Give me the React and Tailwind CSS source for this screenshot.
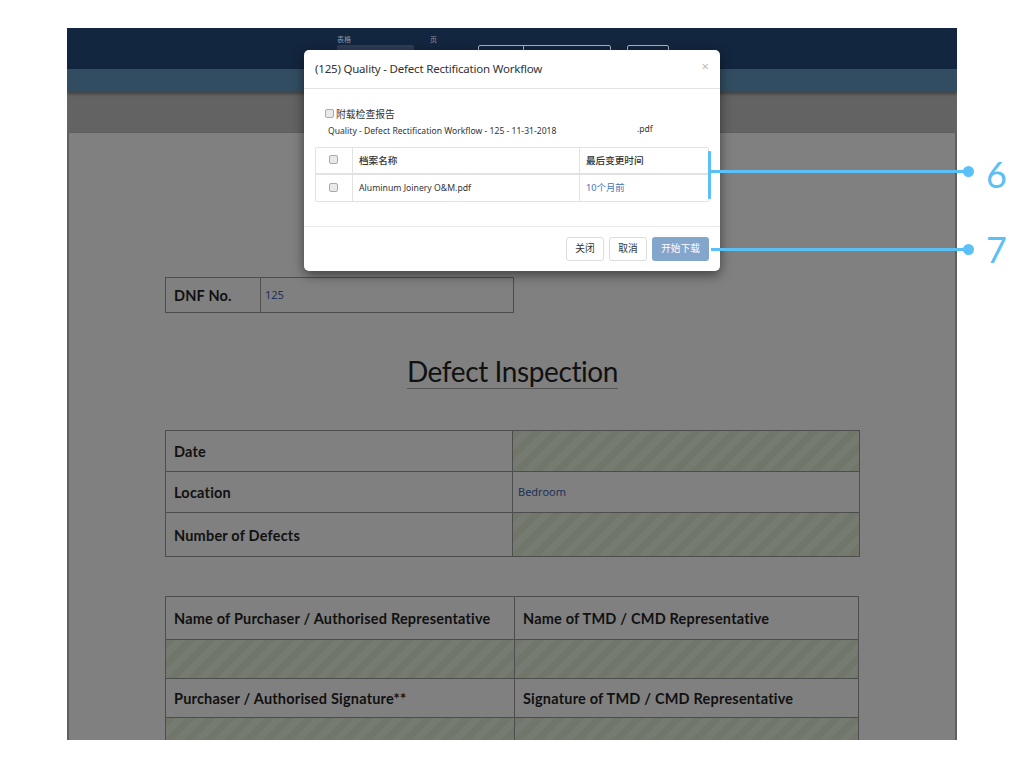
import React from "react";

const stripe = "bg-[repeating-linear-gradient(135deg,#70776a_0px,#70776a_7px,#767b71_7px,#767b71_14px)]";
const cell = "border border-[#4d4d4d] flex items-center px-2 pt-[2px] text-[14.5px] font-bold text-[#111] tracking-[0.2px]";
const value = "flex items-center text-[11px] text-[#1d3058] font-['Noto_Sans',sans-serif]";

function Check({ className = "" }) {
  return <span className={"inline-block w-[9px] h-[9px] rounded-[2px] border border-[#aaa] bg-[#e9e9e9] " + className} />;
}

export default function App() {
  return (
    <div className="relative w-[1024px] h-[768px] bg-white pt-[28px] px-[67px] overflow-hidden font-['Noto_Sans','Noto_Sans_CJK_SC',sans-serif]">
      <div className="h-[712px] w-[890px] flex flex-col overflow-hidden bg-[#636363]">
        <div className="h-[41px] shrink-0 bg-[#13263f] relative">
          <div className="absolute left-[270px] top-[7px] text-[7px] leading-[9px] text-[#8794a3]">表格</div>
          <div className="absolute left-[363px] top-[7px] text-[7px] leading-[9px] text-[#8794a3]">页</div>
          <div className="absolute left-[270px] top-[17px] w-[77px] h-[10px] bg-[#2c3d55] rounded-[2px]" />
          <div className="absolute left-[411px] top-[17px] w-[133px] h-[10px] border border-[#aab2bd] rounded-[2px]" />
          <div className="absolute left-[456px] top-[17px] h-[10px] border-l border-[#aab2bd]" />
          <div className="absolute left-[560px] top-[17px] w-[42px] h-[10px] border border-[#aab2bd] rounded-[2px]" />
        </div>
        <div className="h-[23px] shrink-0 bg-[#324d62] shadow-[0_2px_3px_rgba(0,0,0,0.35)] z-10" />
        <div className="h-[40px] shrink-0 bg-[#636363]" />
        <div className="flex-1 mx-[1px] bg-[#808080] border-x border-t border-[#5e5e5e] pl-[96px] pt-[144px] font-['Lato',sans-serif]">
          <div className="grid grid-cols-[96px_253px] h-[36px] w-[349px]">
            <div className={cell}>DNF No.</div>
            <div className={"border-y border-r border-[#4d4d4d] px-1 " + value}>125</div>
          </div>
          <div className="w-[695px] mt-[38px] flex justify-center">
            <span className="text-[28px] leading-[40px] font-normal tracking-[-0.4px] text-[#111] border-b border-[#555] h-[38px]">Defect Inspection</span>
          </div>
          <div className="w-[695px] mt-[41px] grid grid-cols-[348px_347px] grid-rows-[42px_41px_44px]">
            <div className={cell}>Date</div>
            <div className={"border-y border-r border-[#4d4d4d] " + stripe} />
            <div className={cell + " border-t-0"}>Location</div>
            <div className={"border-b border-r border-[#4d4d4d] px-[5px] " + value}>Bedroom</div>
            <div className={cell + " border-t-0"}>Number of Defects</div>
            <div className={"border-b border-r border-[#4d4d4d] " + stripe} />
          </div>
          <div className="w-[694px] mt-[39px] grid grid-cols-[350px_344px] grid-rows-[44px_39px_39px_40px]">
            <div className={cell}>Name of Purchaser / Authorised Representative</div>
            <div className={cell + " border-l-0"}>Name of TMD / CMD Representative</div>
            <div className={"border-x border-b border-[#4d4d4d] " + stripe} />
            <div className={"border-r border-b border-[#4d4d4d] " + stripe} />
            <div className={cell + " border-t-0"}>Purchaser / Authorised Signature**</div>
            <div className={cell + " border-t-0 border-l-0"}>Signature of TMD / CMD Representative</div>
            <div className={"border-x border-b border-[#4d4d4d] " + stripe} />
            <div className={"border-r border-b border-[#4d4d4d] " + stripe} />
          </div>
        </div>
      </div>

      {/* modal */}
      <div className="absolute z-20 left-[304px] top-[50px] w-[416px] h-[221px] bg-white rounded-[5px] shadow-[0_4px_12px_rgba(0,0,0,0.5)] flex flex-col text-[#333]">
        <div className="h-[39px] shrink-0 border-b border-[#e5e5e5] flex items-center justify-between pl-[11px] pr-[11px]">
          <span className="text-[11.5px] tracking-[-0.2px] text-[#333]">(125) Quality - Defect Rectification Workflow</span>
          <span className="text-[13px] leading-none text-[#bbb] -mt-[6px]">×</span>
        </div>
        <div className="h-[138px] shrink-0 border-b border-[#e9e9e9] pl-[11px] pr-[11px] pt-[19px]">
          <div className="pl-[10px] h-[14px] flex items-center gap-[2px] text-[9.8px] leading-[14px]">
            <Check className="-mt-[3px]" />
            <span>附载检查报告</span>
          </div>
          <div className="pl-[13px] h-[18px] flex items-start text-[8.6px] leading-[18px]">
            <span className="w-[309px]">Quality - Defect Rectification Workflow - 125 - 11-31-2018</span>
            <span className="-mt-[2px]">.pdf</span>
          </div>
          <div className="mt-[7px] w-[394px] border border-[#e2e2e2] rounded-[2px] text-[8.7px]">
            <div className="grid grid-cols-[37px_227px_1fr] h-[27px] border-b-2 border-[#e2e2e2] font-medium text-[9.6px]">
              <div className="flex items-center justify-center border-r border-[#e2e2e2] pr-[1px]"><Check className="-mt-[2px]" /></div>
              <div className="flex items-center px-[6px] pt-[1px] border-r border-[#e2e2e2]">档案名称</div>
              <div className="flex items-center px-[6px] pt-[1px]">最后变更时间</div>
            </div>
            <div className="grid grid-cols-[37px_227px_1fr] h-[26px]">
              <div className="flex items-center justify-center border-r border-[#e2e2e2] pr-[1px]"><Check className="-mt-[1px]" /></div>
              <div className="flex items-center px-[6px] pt-[1px] border-r border-[#e2e2e2]">Aluminum Joinery O&amp;M.pdf</div>
              <div className="flex items-center px-[6px] text-[#3c76b8] text-[9.3px]">10个月前</div>
            </div>
          </div>
        </div>
        <div className="flex-1 flex items-start justify-end gap-[5px] pr-[11px] pt-[10px] text-[9.7px]">
          <button className="w-[38px] h-[24px] border border-[#ddd] rounded-[3px] bg-white text-[#333]">关闭</button>
          <button className="w-[38px] h-[24px] border border-[#ddd] rounded-[3px] bg-white text-[#333]">取消</button>
          <button className="w-[57px] h-[24px] rounded-[3px] bg-[#84a5cc] text-white">开始下载</button>
        </div>
      </div>

      {/* callouts */}
      <div className="absolute z-30 left-[708px] top-[151px] w-[3px] h-[48px] bg-[#5ac0f5] rounded-[1px]" />
      <div className="absolute z-30 left-[711px] top-[170px] w-[256px] h-[3px] bg-[#5ac0f5]" />
      <div className="absolute z-30 left-[963px] top-[166px] w-[11px] h-[11px] rounded-full bg-[#5ac0f5]" />
      <div className="absolute z-30 left-[986px] top-[152px] text-[36px] leading-[44px] font-normal font-['Lato',sans-serif] text-[#5ac0f5]">6</div>
      <div className="absolute z-30 left-[711px] top-[248px] w-[256px] h-[3px] bg-[#5ac0f5]" />
      <div className="absolute z-30 left-[963px] top-[244px] w-[11px] h-[11px] rounded-full bg-[#5ac0f5]" />
      <div className="absolute z-30 left-[986px] top-[227px] text-[36px] leading-[44px] font-normal font-['Lato',sans-serif] text-[#5ac0f5]">7</div>
    </div>
  );
}
